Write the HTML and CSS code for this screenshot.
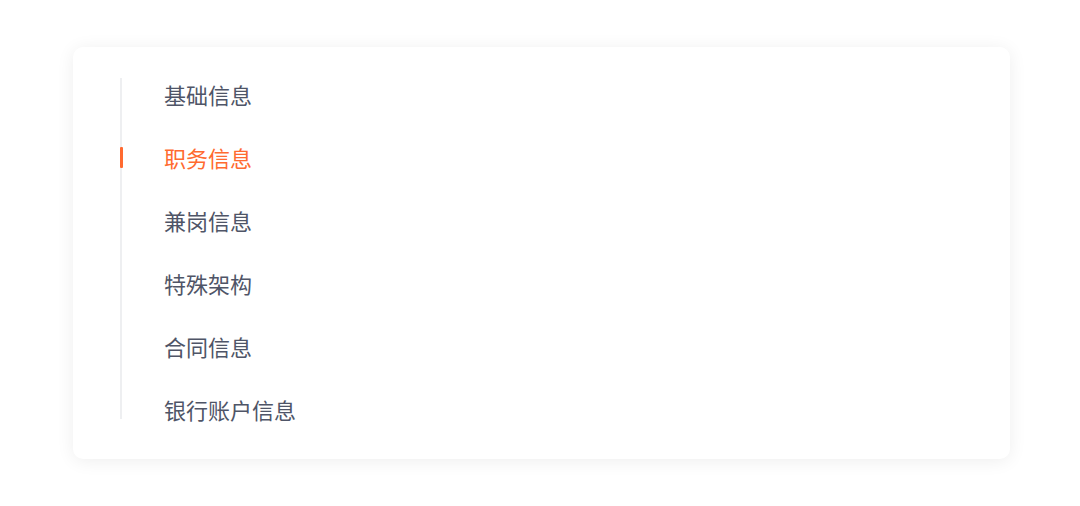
FILE: index.html
```html
<!DOCTYPE html>
<html lang="zh">
<head>
<meta charset="utf-8">
<link rel="stylesheet" href="styles.css">
</head>
<body>
<div class="card">
  <ul class="anchor">
    <li class="item">基础信息</li>
    <li class="item active">职务信息</li>
    <li class="item">兼岗信息</li>
    <li class="item">特殊架构</li>
    <li class="item">合同信息</li>
    <li class="item">银行账户信息</li>
  </ul>
</div>
</body>
</html>
```

FILE: styles.css
```css
html, body {
  margin: 0;
  padding: 0;
  background: #ffffff;
  width: 1080px;
  height: 506px;
  overflow: hidden;
}
body {
  padding: 47px 0 0 73px;
  box-sizing: border-box;
  font-family: "Noto Sans CJK SC", "Noto Sans", sans-serif;
}
.card {
  width: 937px;
  height: 412px;
  box-sizing: border-box;
  background: #ffffff;
  border-radius: 10px;
  box-shadow: 0 2px 18px rgba(0, 0, 0, 0.07);
  padding: 31px 0 0 47px;
}
.anchor {
  list-style: none;
  margin: 0;
  padding: 0 0 0 42px;
  height: 341px;
  border-left: 2px solid #eeeff1;
  display: flex;
  flex-direction: column;
  gap: 31px;
}
.item {
  position: relative;
  height: 32px;
  line-height: 32px;
  font-size: 22px;
  color: #4f5567;
  white-space: nowrap;
}
.item.active {
  color: #ff6a30;
}
.item.active::before {
  content: "";
  position: absolute;
  left: -44px;
  top: 6px;
  width: 3px;
  height: 21px;
  background: #ff6a30;
  border-radius: 1px;
}
```
